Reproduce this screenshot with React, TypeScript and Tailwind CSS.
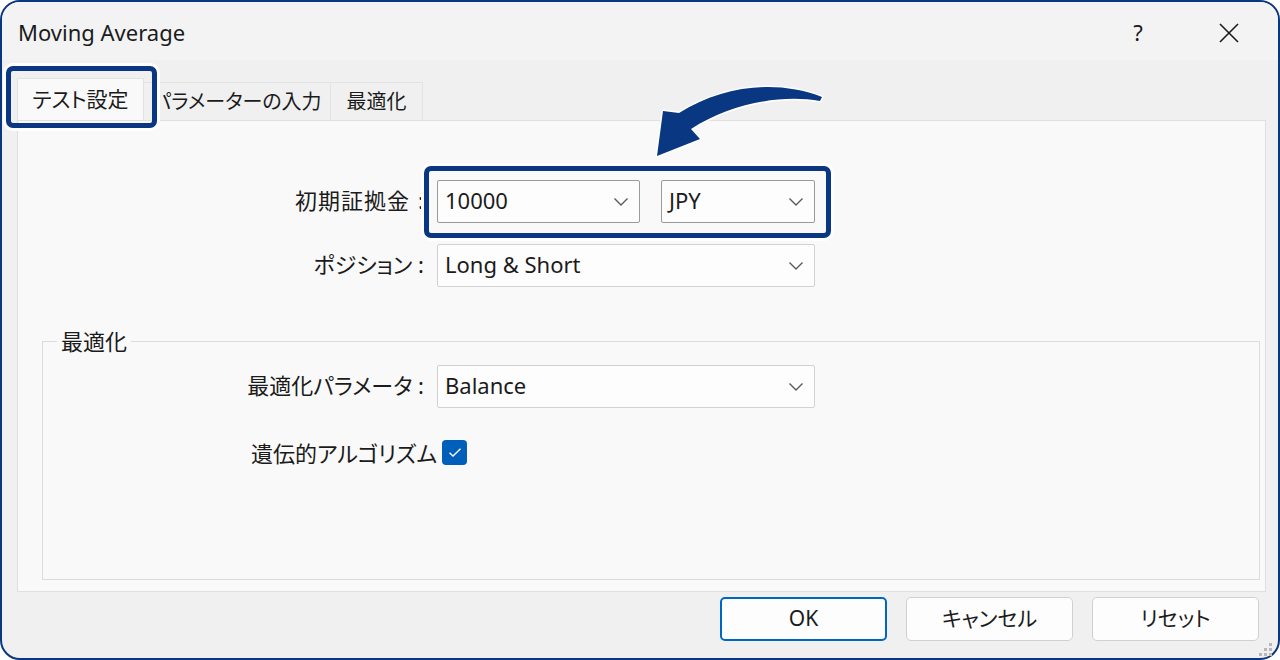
import React from 'react';

const Chevron = () => (
    <svg width="16" height="10" viewBox="0 0 16 10" className="shrink-0">
        <path d="M1.5 1.5 L8 8 L14.5 1.5" fill="none" stroke="#5a5a5a" strokeWidth="1.4" />
    </svg>
);

interface ComboProps {
    value: string;
    width: string;
    dark?: boolean;
}

const Combo = ({ value, width, dark }: ComboProps) => (
    <div
        className={`${width} h-[43px] flex items-center justify-between pl-[7px] pr-[10px] bg-[#fdfdfd] border rounded-[2px] ${
            dark ? 'border-[#9a9a9a]' : 'border-[#d2d2d2]'
        }`}
    >
        <span className="text-[22px] text-[#1b1b1b] leading-none pb-[4px]">{value}</span>
        <Chevron />
    </div>
);

const App = () => {
    return (
        <div
            className="relative w-[1280px] h-[660px] bg-white [font-feature-settings:'palt']"
            style={{ fontFamily: '"Noto Sans", "Noto Sans CJK JP", sans-serif' }}
        >
            <div className="h-full rounded-[20px] border-2 border-[#0a3781] bg-[#f0f0f0] flex flex-col overflow-hidden">
                {/* Title bar */}
                <div className="h-[58px] shrink-0 bg-[#f3f3f3] flex items-center pt-[3px] pl-[16px] text-[#1b1b1b]">
                    <span className="text-[22px]">Moving Average</span>
                    <span className="ml-auto text-[22px] w-[20px] text-center">?</span>
                    <svg width="22" height="22" viewBox="0 0 22 22" className="ml-[70px] mr-[38px]">
                        <path d="M2 2 L20 20 M20 2 L2 20" stroke="#1b1b1b" strokeWidth="1.6" />
                    </svg>
                </div>

                {/* Tabs */}
                <div className="h-[60px] shrink-0 flex items-end pl-[15px]">
                    <div className="h-[42px] w-[127px] bg-[#f9f9f9] border border-b-0 border-[#e3e3e3] flex items-center justify-center text-[21px] text-[#1b1b1b]">
                        テスト設定
                    </div>
                    <div className="h-[38px] w-[187px] bg-[#f0f0f0] border border-b-0 border-l-0 border-[#e3e3e3] flex items-center justify-center text-[20px] text-[#1b1b1b]">
                        パラメーターの入力
                    </div>
                    <div className="h-[38px] w-[92px] bg-[#f0f0f0] border border-b-0 border-l-0 border-[#e3e3e3] flex items-center justify-center text-[20px] text-[#1b1b1b]">
                        最適化
                    </div>
                </div>

                {/* Panel */}
                <div className="h-[472px] shrink-0 ml-[15px] mr-[12px] bg-[#f9f9f9] border border-[#e0e0e0] flex flex-col pt-[59px] text-[#1b1b1b]">
                    <div className="flex items-center">
                        <div className="w-[406px] text-right text-[22px] leading-none pb-[4px]">
                            <span className="tracking-[1px]">初期証拠金</span>
                            <span className="ml-[8px]">:</span>
                        </div>
                        <div className="ml-[13px]">
                            <Combo value="10000" width="w-[203px]" dark />
                        </div>
                        <div className="ml-[21px]">
                            <Combo value="JPY" width="w-[154px]" dark />
                        </div>
                    </div>
                    <div className="flex items-center mt-[21px]">
                        <div className="w-[406px] text-right text-[22px] leading-none pb-[4px]">ポジション :</div>
                        <div className="ml-[13px]">
                            <Combo value="Long & Short" width="w-[378px]" />
                        </div>
                    </div>

                    <fieldset className="flex-1 mt-[39px] ml-[24px] mr-[5px] mb-[11px] border border-[#dcdcdc] pt-[9px]">
                        <legend className="ml-[14px] px-[4px] text-[22px] leading-[30px]">最適化</legend>
                        <div className="flex items-center">
                            <div className="w-[381px] text-right text-[22px] leading-none pb-[4px]">最適化パラメータ :</div>
                            <div className="ml-[13px]">
                                <Combo value="Balance" width="w-[378px]" />
                            </div>
                        </div>
                        <div className="flex items-center mt-[32px]">
                            <div className="w-[394px] text-right text-[22px] leading-none">遺伝的アルゴリズム</div>
                            <div className="ml-[5px] w-[25px] h-[25px] rounded-[4px] bg-[#005fb8] flex items-center justify-center">
                                <svg width="14" height="11" viewBox="0 0 14 11">
                                    <path d="M1.5 5.8 L5 9 L12.5 1.8" fill="none" stroke="#ffffff" strokeWidth="1.4" />
                                </svg>
                            </div>
                        </div>
                    </fieldset>
                </div>

                {/* Buttons */}
                <div className="flex-1 flex justify-end items-start pt-[5px] pr-[19px] gap-[19px]">
                    <button className="w-[167px] h-[44px] rounded-[5px] bg-[#fdfdfd] border-2 border-[#0067c0] text-[21px] text-[#1b1b1b]">
                        OK
                    </button>
                    <button className="w-[167px] h-[44px] rounded-[5px] bg-[#fdfdfd] border border-[#d0d0d0] text-[21px] text-[#1b1b1b]">
                        キャンセル
                    </button>
                    <button className="w-[167px] h-[44px] rounded-[5px] bg-[#fdfdfd] border border-[#d0d0d0] text-[21px] text-[#1b1b1b]">
                        リセット
                    </button>
                </div>
            </div>

            {/* Resize gripper */}
            <svg width="16" height="16" viewBox="0 0 16 16" className="absolute left-[1258px] top-[642px]">
                <rect x="11" y="1" width="3" height="3" fill="#b8b8b8" />
                <rect x="6" y="6" width="3" height="3" fill="#b8b8b8" />
                <rect x="11" y="6" width="3" height="3" fill="#b8b8b8" />
                <rect x="1" y="11" width="3" height="3" fill="#b8b8b8" />
                <rect x="6" y="11" width="3" height="3" fill="#b8b8b8" />
                <rect x="11" y="11" width="3" height="3" fill="#b8b8b8" />
            </svg>

            {/* Highlight boxes */}
            <div className="absolute left-[6px] top-[66px] w-[151px] h-[62px] rounded-[7px] border-[5px] border-[#0a3781] shadow-[0_0_0_3px_#ffffff]" />
            <div className="absolute left-[424px] top-[166px] w-[407px] h-[72px] rounded-[7px] border-[5px] border-[#0a3781] shadow-[0_0_0_3px_#ffffff]" />

            {/* Arrow */}
            <svg width="1280" height="660" className="absolute left-0 top-0 pointer-events-none">
                <path
                    d="M822 97 C776 79 722 86 679 113 L663 111 L657 156 L700 139 L691 129 C730 104 780 94 820 101 Z"
                    fill="#0a3781"
                    stroke="#ffffff"
                    strokeWidth="3"
                    strokeLinejoin="round"
                    paintOrder="stroke"
                />
            </svg>
        </div>
    );
};

export default App;
